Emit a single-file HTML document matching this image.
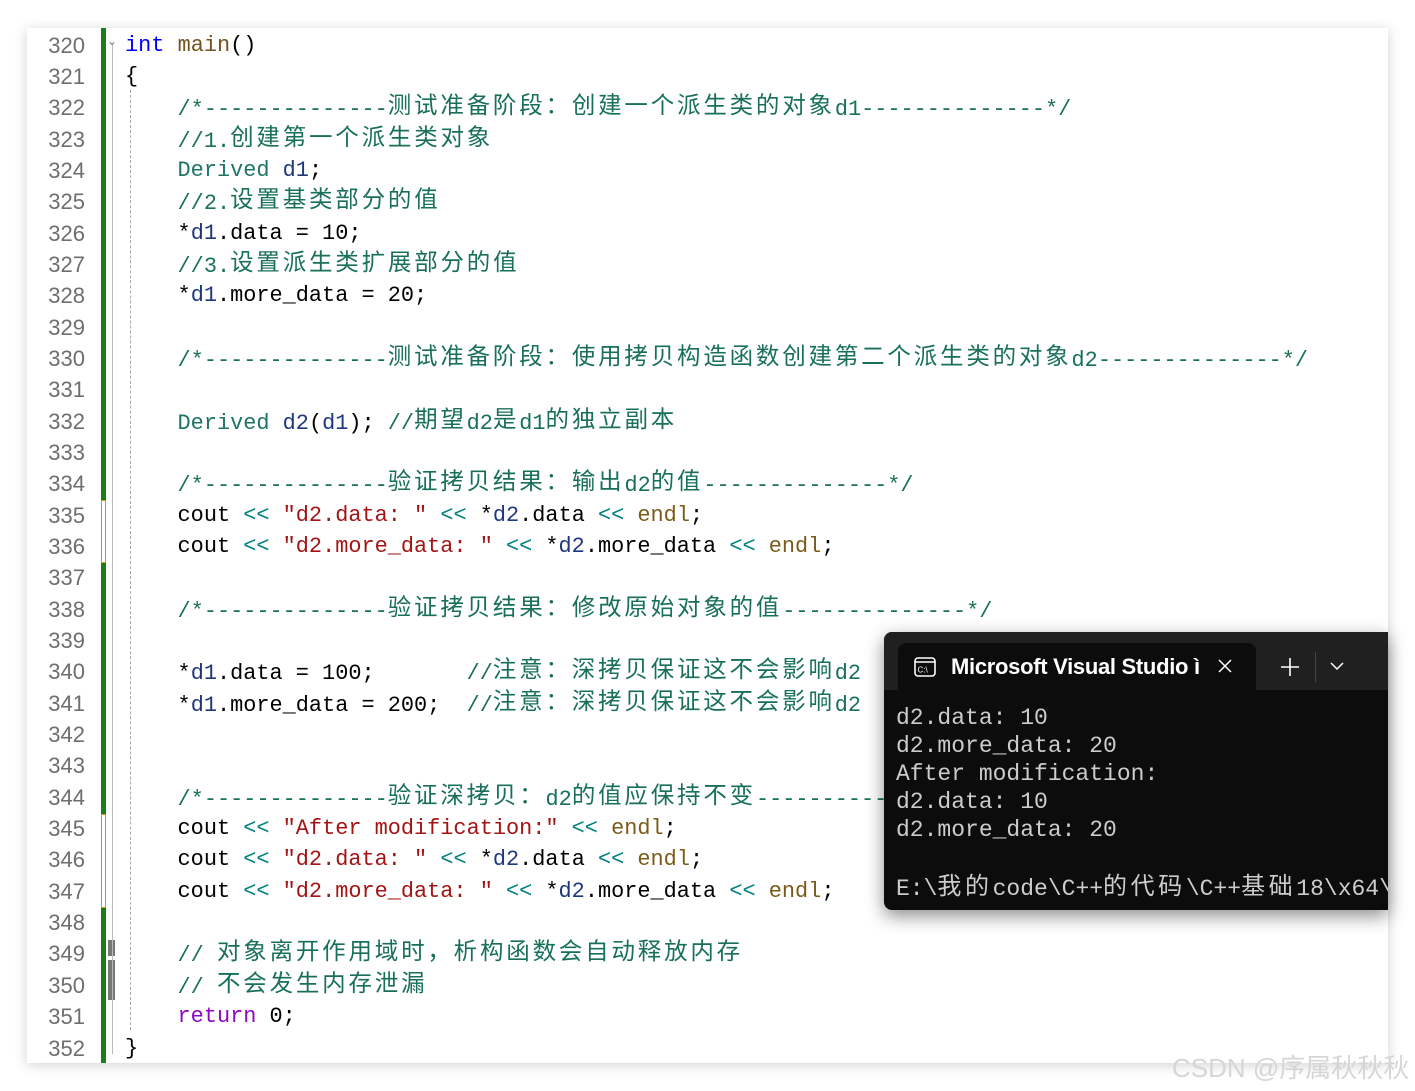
<!DOCTYPE html>
<html><head><meta charset="utf-8"><style>
*{margin:0;padding:0;box-sizing:border-box}
body{width:1415px;height:1091px;background:#fff;position:relative;overflow:hidden;font-family:"Liberation Mono","Noto Sans CJK SC",monospace}
#ed{position:absolute;left:27px;top:28px;width:1361px;height:1035px;background:#fff;box-shadow:0 2px 12px rgba(0,0,0,.18);overflow:hidden}
#nums{position:absolute;left:0;top:1.5px;width:58px;text-align:right;font-family:"Liberation Sans",sans-serif;font-size:22px;color:#6e6e6e;line-height:31.35px}
#green{position:absolute;left:74px;top:0;width:5px;height:1035px;background:#1a7f1a}
.yel{position:absolute;left:74px;width:5px;background:#fff;border:1px solid #c9a000}
#fold{position:absolute;left:85px;top:16px;width:1px;height:1010px;background:#bbb}
#guide{position:absolute;left:103px;top:62px;height:940px;border-left:1px dashed #aaa}
#code{position:absolute;left:98px;top:1.5px;font-size:21.9px;line-height:31.35px;color:#000}
#code div{height:31.35px;white-space:pre}
i{font-style:normal;font-family:"Noto Sans CJK SC",sans-serif;font-size:23.5px;letter-spacing:2.8px;line-height:1;vertical-align:2px}
.k{color:#0000ff}.f{color:#74531f}.c{color:#18705a}.t{color:#1f7468}.v{color:#1f377f}.s{color:#a31515}.o{color:#008080}.r{color:#8f08c4}.e{color:#7a5c1a}
#term{position:absolute;left:884px;top:632px;width:504px;height:278px;background:#0c0c0c;border-radius:8px 0 0 8px;box-shadow:0 6px 18px rgba(0,0,0,.45);overflow:hidden}
#bar{position:absolute;left:0;top:0;width:100%;height:58px;background:#202020}
#tab{position:absolute;left:14px;top:11px;width:358px;height:50px;background:#0c0c0c;border-radius:8px 8px 0 0;color:#fff;font-family:"Liberation Sans",sans-serif;font-size:22px}
#out{position:absolute;left:12px;top:72px;font-size:23px;line-height:28px;color:#cccccc;white-space:pre}
#out i{font-size:24px;letter-spacing:3.6px;vertical-align:1px}
#wm{position:absolute;left:1172px;top:1048px;font-family:"Liberation Sans","Noto Sans CJK SC",sans-serif;font-size:26px;color:#d6d6d6}
</style></head><body>
<div id="ed">
<div id="nums">320<br>321<br>322<br>323<br>324<br>325<br>326<br>327<br>328<br>329<br>330<br>331<br>332<br>333<br>334<br>335<br>336<br>337<br>338<br>339<br>340<br>341<br>342<br>343<br>344<br>345<br>346<br>347<br>348<br>349<br>350<br>351<br>352</div>
<div id="green"></div>
<div class="yel" style="top:472px;height:63px"></div>
<div class="yel" style="top:786px;height:94px"></div>
<div style="position:absolute;left:81px;top:912px;width:7px;height:60px;background:#777"></div>
<div style="position:absolute;left:81px;top:928px;width:7px;height:4px;background:#fff"></div>
<div id="fold"></div>
<div style="position:absolute;left:80px;top:6px;font-size:12px;color:#777;font-family:'DejaVu Sans'">⌄</div>
<div id="guide"></div>
<div id="code"><div><span class="k">int</span> <span class="f">main</span>()</div><div>{</div><div class="c">    /*--------------<i>测试准备阶段：创建一个派生类的对象</i>d1--------------*/</div><div class="c">    //1.<i>创建第一个派生类对象</i></div><div>    <span class="t">Derived</span> <span class="v">d1</span>;</div><div class="c">    //2.<i>设置基类部分的值</i></div><div>    *<span class="v">d1</span>.data = 10;</div><div class="c">    //3.<i>设置派生类扩展部分的值</i></div><div>    *<span class="v">d1</span>.more_data = 20;</div><div></div><div class="c">    /*--------------<i>测试准备阶段：使用拷贝构造函数创建第二个派生类的对象</i>d2--------------*/</div><div></div><div>    <span class="t">Derived</span> <span class="v">d2</span>(<span class="v">d1</span>); <span class="c">//<i>期望</i>d2<i>是</i>d1<i>的独立副本</i></span></div><div></div><div class="c">    /*--------------<i>验证拷贝结果：输出</i>d2<i>的值</i>--------------*/</div><div>    cout <span class="o">&lt;&lt;</span> <span class="s">"d2.data: "</span> <span class="o">&lt;&lt;</span> *<span class="v">d2</span>.data <span class="o">&lt;&lt;</span> <span class="e">endl</span>;</div><div>    cout <span class="o">&lt;&lt;</span> <span class="s">"d2.more_data: "</span> <span class="o">&lt;&lt;</span> *<span class="v">d2</span>.more_data <span class="o">&lt;&lt;</span> <span class="e">endl</span>;</div><div></div><div class="c">    /*--------------<i>验证拷贝结果：修改原始对象的值</i>--------------*/</div><div></div><div>    *<span class="v">d1</span>.data = 100;       <span class="c">//<i>注意：深拷贝保证这不会影响</i>d2</span></div><div>    *<span class="v">d1</span>.more_data = 200;  <span class="c">//<i>注意：深拷贝保证这不会影响</i>d2</span></div><div></div><div></div><div class="c">    /*--------------<i>验证深拷贝：</i>d2<i>的值应保持不变</i>--------------*/</div><div>    cout <span class="o">&lt;&lt;</span> <span class="s">"After modification:"</span> <span class="o">&lt;&lt;</span> <span class="e">endl</span>;</div><div>    cout <span class="o">&lt;&lt;</span> <span class="s">"d2.data: "</span> <span class="o">&lt;&lt;</span> *<span class="v">d2</span>.data <span class="o">&lt;&lt;</span> <span class="e">endl</span>;</div><div>    cout <span class="o">&lt;&lt;</span> <span class="s">"d2.more_data: "</span> <span class="o">&lt;&lt;</span> *<span class="v">d2</span>.more_data <span class="o">&lt;&lt;</span> <span class="e">endl</span>;</div><div></div><div class="c">    // <i>对象离开作用域时，析构函数会自动释放内存</i></div><div class="c">    // <i>不会发生内存泄漏</i></div><div>    <span class="r">return</span> 0;</div><div>}</div></div>
</div>
<div id="term">
<div id="bar"></div>
<div id="tab">
<svg style="position:absolute;left:16px;top:14px" width="22" height="20" viewBox="0 0 22 20"><rect x="1" y="1" width="20" height="18" rx="3" fill="none" stroke="#fff" stroke-width="1.6"/><line x1="1" y1="5" x2="21" y2="5" stroke="#fff" stroke-width="1.6"/><text x="3.5" y="15.5" font-size="8" fill="#fff" font-family="Liberation Sans">C:\</text></svg>
<span style="position:absolute;left:53px;top:11px;font-weight:bold;letter-spacing:-0.3px">Microsoft Visual Studio ì</span>
<svg style="position:absolute;left:320px;top:16px" width="14" height="14"><path d="M1 1L13 13M13 1L1 13" stroke="#fff" stroke-width="1.5"/></svg>
</div>
<svg style="position:absolute;left:396px;top:25px" width="20" height="20"><path d="M10 1V19M1 10H19" stroke="#fff" stroke-width="1.6"/></svg>
<div style="position:absolute;left:431px;top:20px;width:1px;height:30px;background:#444"></div>
<svg style="position:absolute;left:446px;top:30px" width="14" height="9"><path d="M1 1L7 7L13 1" stroke="#fff" stroke-width="1.5" fill="none"/></svg>
<div id="out">d2.data: 10
d2.more_data: 20
After modification:
d2.data: 10
d2.more_data: 20

E:\<i>我的</i>code\C++<i>的代码</i>\C++<i>基础</i>18\x64\</div>
</div>
<div id="wm">CSDN @序属秋秋秋</div>
</body></html>
